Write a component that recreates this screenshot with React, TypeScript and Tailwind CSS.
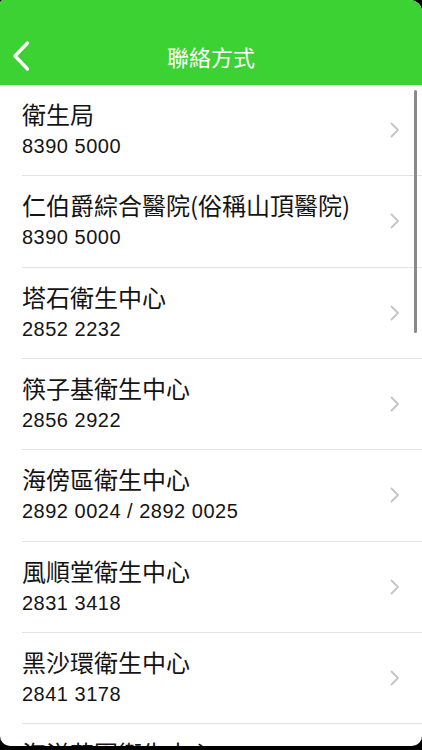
import React from 'react';

const contacts = [
  { name: '衛生局', phone: '8390 5000' },
  { name: '仁伯爵綜合醫院(俗稱山頂醫院)', phone: '8390 5000' },
  { name: '塔石衛生中心', phone: '2852 2232' },
  { name: '筷子基衛生中心', phone: '2856 2922' },
  { name: '海傍區衛生中心', phone: '2892 0024 / 2892 0025' },
  { name: '風順堂衛生中心', phone: '2831 3418' },
  { name: '黑沙環衛生中心', phone: '2841 3178' },
  { name: '海洋花園衛生中心', phone: '2882 1800' },
];

const cjk = { fontFamily: '"Noto Sans CJK TC", "Noto Sans", sans-serif' };
const digits = { fontFamily: '"Liberation Sans", "Noto Sans CJK TC", sans-serif' };

function Chevron() {
  return (
    <svg width="10" height="16" viewBox="0 0 10 16" fill="none">
      <path d="M1.5 1.5L8 8l-6.5 6.5" stroke="#c4c4c8" strokeWidth="1.8" strokeLinecap="round" strokeLinejoin="round" />
    </svg>
  );
}

export default function App() {
  return (
    <div className="w-[422px] h-[750px] bg-black overflow-hidden">
      <div className="relative h-[746px] bg-white rounded-tl-[4px] rounded-tr-[12px] rounded-b-[10px] overflow-hidden">
        <div className="h-[85px] bg-[#3cd233] pt-[34px] pb-[7px]">
          <div className="h-[44px] flex items-center">
            <div className="w-[60px] pl-[11px] flex items-center">
              <svg width="20" height="32" viewBox="0 0 20 32" fill="none">
                <path d="M16.5 3L4 16l12.5 13" stroke="white" strokeWidth="3.4" strokeLinecap="round" strokeLinejoin="round" />
              </svg>
            </div>
            <div className="flex-1 text-center text-white text-[22px] font-normal" style={cjk}>
              聯絡方式
            </div>
            <div className="w-[60px]" />
          </div>
        </div>

        <div className="flex flex-col">
          {contacts.map((c) => (
            <div key={c.name} className="ml-[22px] h-[91.33px] shrink-0 border-b border-[#e3e3e5] flex items-center pr-[22px]">
              <div className="flex-1 flex flex-col gap-[6px] pb-[2px]">
                <div className="text-[24px] leading-[28px] text-[#141414] whitespace-nowrap" style={cjk}>
                  {c.name}
                </div>
                <div className="text-[20px] leading-[24px] tracking-[0.5px] text-[#141414]" style={digits}>
                  {c.phone}
                </div>
              </div>
              <Chevron />
            </div>
          ))}
        </div>

        <div className="absolute left-[414px] top-[90px] w-[3px] h-[243px] rounded-full bg-[#8a8a8a]" />
      </div>
    </div>
  );
}
